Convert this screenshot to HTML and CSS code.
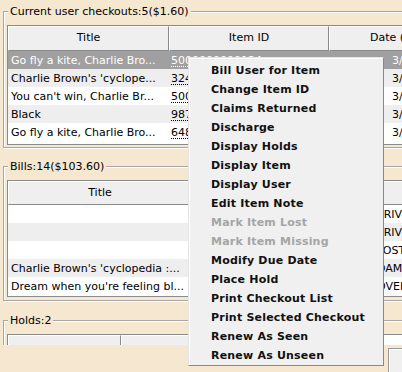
FILE: index.html
```html
<!DOCTYPE html>
<html lang="en">
<head>
    <meta charset="UTF-8">
    <title>Checkouts</title>
    <link rel="stylesheet" href="styles.css">
</head>
<body>
    <div class="window">
        <fieldset class="group">
            <legend>Current user checkouts:5($1.60)</legend>
            <div class="grid checkouts">
                <div class="head">
                    <span>Title</span>
                    <span>Item ID</span>
                    <span class="date-head">Date (Due)</span>
                </div>
                <div class="row sel">
                    <span>Go fly a kite, Charlie Bro...</span>
                    <span><u>5000000000134</u></span>
                    <span class="date">3/18/2010,23:59</span>
                </div>
                <div class="row">
                    <span>Charlie Brown's 'cyclope...</span>
                    <span><u>32435001234567</u></span>
                    <span class="date">3/18/2010,23:59</span>
                </div>
                <div class="row">
                    <span>You can't win, Charlie Br...</span>
                    <span><u>50000000002890</u></span>
                    <span class="date">3/18/2010,23:59</span>
                </div>
                <div class="row">
                    <span>Black</span>
                    <span><u>98765432100123</u></span>
                    <span class="date">3/18/2010,23:59</span>
                </div>
                <div class="row">
                    <span>Go fly a kite, Charlie Bro...</span>
                    <span><u>64837200011122</u></span>
                    <span class="date">3/18/2010,23:59</span>
                </div>
            </div>
        </fieldset>

        <fieldset class="group bills-group">
            <legend>Bills:14($103.60)</legend>
            <div class="grid bills">
                <div class="head">
                    <span>Title</span>
                    <span>Date Billed</span>
                    <span>Amount</span>
                    <span>Reason</span>
                </div>
                <div class="row"><span></span><span>3/01/2010</span><span>$2.00</span><span class="reason">PRIVILEGE</span></div>
                <div class="row"><span></span><span>3/01/2010</span><span>$2.00</span><span class="reason">PRIVILEGE</span></div>
                <div class="row"><span></span><span>3/02/2010</span><span>$25.00</span><span class="reason">LOST</span></div>
                <div class="row"><span>Charlie Brown's 'cyclopedia :...</span><span>3/05/2010</span><span>$10.00</span><span class="reason">DAMAGED</span></div>
                <div class="row"><span>Dream when you're feeling bl...</span><span>3/08/2010</span><span>$0.60</span><span class="reason">OVERDUE</span></div>
            </div>
        </fieldset>

        <fieldset class="group holds-group">
            <legend>Holds:2</legend>
            <div class="grid holds">
                <div class="head">
                    <span>Title</span>
                    <span>Item ID</span>
                </div>
            </div>
        </fieldset>
    </div>
    <div class="stray"></div>

    <ul class="menu">
        <li>Bill User for Item</li>
        <li>Change Item ID</li>
        <li>Claims Returned</li>
        <li>Discharge</li>
        <li>Display Holds</li>
        <li>Display Item</li>
        <li>Display User</li>
        <li>Edit Item Note</li>
        <li class="off">Mark Item Lost</li>
        <li class="off">Mark Item Missing</li>
        <li>Modify Due Date</li>
        <li>Place Hold</li>
        <li>Print Checkout List</li>
        <li>Print Selected Checkout</li>
        <li>Renew As Seen</li>
        <li>Renew As Unseen</li>
    </ul>
</body>
</html>
```

FILE: styles.css
```css
* {
    box-sizing: border-box;
}
body {
    margin: 0;
    width: 402px;
    height: 372px;
    overflow: hidden;
    position: relative;
    background: #f6e7d0;
    font: 11px "DejaVu Sans", Tahoma, sans-serif;
    color: #000;
}
.window {
    width: 700px;
    height: 345px;
    overflow: hidden;
}
.group {
    margin: 3px 0 0 3px;
    padding: 6px 0 2px 3px;
    border: 1px solid #a6a6a6;
    box-shadow: inset 1px 1px 0 #fff, 1px 1px 0 #fff;
    min-width: 0;
}
.group legend {
    margin-left: 1px;
    padding: 1px 2px 0;
    line-height: 15px;
    background: #f6e7d0;
}
.bills-group {
    margin-top: 10px;
    padding-bottom: 3px;
}
.holds-group {
    margin-top: 11px;
}
.grid {
    border: 1px solid #8a8a8a;
    background: #fff;
}
.checkouts {
    padding-bottom: 3px;
}
.bills {
    padding-bottom: 1px;
}
.head {
    display: flex;
    height: 24px;
}
.checkouts .head {
    height: 25px;
}
.head span {
    flex: none;
    background: #efefef;
    border: 1px solid;
    border-color: #fff #8a8a8a #8a8a8a #fff;
    text-align: center;
    line-height: 22px;
    white-space: nowrap;
    overflow: hidden;
}
.row {
    display: flex;
    height: 18px;
    line-height: 20px;
    white-space: nowrap;
    overflow: hidden;
}
.row:nth-child(odd) {
    background: #eeeeee;
}
.row.sel {
    background: #a0a0a0;
    color: #fff;
}
.row span {
    flex: none;
    overflow: hidden;
    padding-left: 2px;
}
.row u {
    text-decoration: underline dotted;
    text-underline-offset: 2px;
}

/* column widths */
.checkouts span:nth-child(1) { width: 161px; }
.checkouts span:nth-child(2) { width: 160px; }
.checkouts span:nth-child(3) { width: 300px; }
.checkouts .row span:first-child { padding-left: 3px; }
.checkouts .date-head {
    text-align: left;
    padding-left: 40px;
}
.checkouts .date {
    padding-left: 63px;
}
.bills span:nth-child(1) { width: 184px; padding-left: 3px; }
.bills span:nth-child(2) { width: 100px; }
.bills span:nth-child(3) { width: 82px; }
.bills span:nth-child(4) { width: 300px; }
.bills .reason {
    padding-left: 3px;
}
.bills .head span:first-child { padding-left: 0; }
.holds span:nth-child(1) { width: 113px; }
.holds span:nth-child(2) { width: 200px; }
.holds .head span {
    line-height: 28px;
}

.stray {
    margin: 3px 0 0 388px;
    width: 20px;
    height: 30px;
    background: #f0f0f0;
    border-top: 1px solid #999;
    border-left: 1px solid #999;
    box-shadow: inset 1px 1px 0 #fff;
}

/* popup menu */
.menu {
    position: absolute;
    left: 188px;
    top: 57px;
    width: 196px;
    margin: 0;
    padding: 3px 0 0;
    list-style: none;
    background: #f0f0f0;
    border: 1px solid;
    border-color: #e4e4e4 #888 #888 #e4e4e4;
    box-shadow: inset 1px 1px 0 #fff;
    font-weight: bold;
    letter-spacing: 0.2px;
}
.menu li {
    height: 19px;
    line-height: 19px;
    padding-left: 22px;
    white-space: nowrap;
    color: #111;
}
.menu li.off {
    color: #a5a5a5;
}
```
